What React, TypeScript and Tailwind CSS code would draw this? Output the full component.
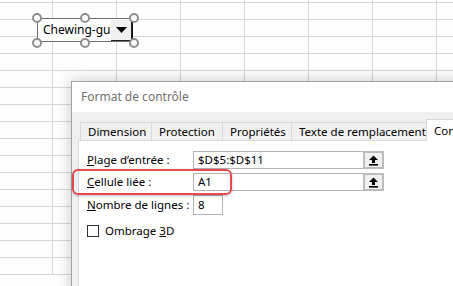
import React from 'react';

const COLS = [53, 64, 64, 64, 64, 64, 64, 64];
const ROWS = [3, ...Array(16).fill(17)];

const UploadIcon: React.FC = () => (
  <svg width="11" height="11" viewBox="0 0 11 11">
    <path d="M5.5 0.5 L10 5 H7 V8 H4 V5 H1 Z" fill="#000" />
    <rect x="1" y="9" width="9" height="1.6" fill="#000" />
  </svg>
);

const Handle: React.FC<{ className: string }> = ({ className }) => (
  <div className={`absolute w-[10px] h-[10px] rounded-full border-2 border-[#8e8e8e] bg-white ${className}`} />
);

const SheetGrid: React.FC = () => (
  <div className="flex flex-col">
    {ROWS.map((h, r) => (
      <div key={r} className="flex shrink-0" style={{ height: h }}>
        {COLS.map((w, c) => (
          <div key={c} className="shrink-0 border-r border-b border-[#d6d6d6]" style={{ width: w }} />
        ))}
      </div>
    ))}
  </div>
);

const Field: React.FC<{ label: React.ReactNode; value: string; picker?: boolean; narrow?: boolean }> = ({
  label,
  value,
  picker,
  narrow,
}) => (
  <div className="flex items-center h-[18px]">
    <div className="w-[106px] shrink-0 whitespace-nowrap text-black">{label}</div>
    {narrow ? (
      <div className="w-[30px] h-[20px] border border-[#b4b4b4] bg-white pl-[4px] flex items-center">{value}</div>
    ) : (
      <div className="flex h-[18px]">
        <div className="w-[170px] border border-[#b4b4b4] border-r-0 bg-white pl-[4px] flex items-center">{value}</div>
        <div className="w-[21px] border-2 border-[#bdbdbd] bg-[#f0f0f0] flex items-center justify-center">
          {picker && <UploadIcon />}
        </div>
      </div>
    )}
  </div>
);

const TABS = [
  { name: 'Dimension', w: 71 },
  { name: 'Protection', w: 71 },
  { name: 'Propriétés', w: 69 },
  { name: 'Texte de remplacement', w: 135 },
];

export default function App() {
  return (
    <div className="relative w-[453px] h-[286px] overflow-hidden bg-[#fdfefd] text-[11.5px] leading-none font-['Segoe_UI','Noto_Sans',sans-serif]">
      <SheetGrid />

      {/* combo box form control, selected */}
      <div className="absolute left-[37px] top-[18px] w-[96px] h-[24px]">
        <div className="flex h-full border border-[#6e6e6e] border-r-[#111] bg-white overflow-hidden">
          <div className="flex-1 pl-[5px] flex items-center whitespace-nowrap overflow-hidden text-black text-[12px]">
            Chewing-gum
          </div>
          <div className="w-[21px] mt-[1px] bg-[#efefef] border-r border-b border-[#222] flex items-center justify-center">
            <svg width="11" height="6" viewBox="0 0 11 6">
              <path d="M0 0 H11 L5.5 6 Z" fill="#000" />
            </svg>
          </div>
        </div>
        <Handle className="-left-[5px] -top-[5px]" />
        <Handle className="left-[43px] -top-[5px]" />
        <Handle className="-right-[6px] -top-[5px]" />
        <Handle className="-left-[5px] -bottom-[6px]" />
        <Handle className="left-[43px] -bottom-[6px]" />
        <Handle className="-right-[6px] -bottom-[6px]" />
      </div>

      {/* Format de contrôle dialog */}
      <div className="absolute left-[71px] top-[81px] w-[400px] h-[230px] border border-[#a3a3a3] bg-[#f0f0f0] shadow-[0_0_14px_rgba(0,0,0,0.22)]">
        <div className="h-[30px] bg-white flex items-center pl-[9px] text-[12px] text-[#707070]">Format de contrôle</div>
        <div className="flex items-end h-[28px] pl-[8px]">
          {TABS.map((t) => (
            <div
              key={t.name}
              className="h-[18px] shrink-0 border border-b-0 border-r-0 border-[#d9d9d9] flex items-center pl-[7px] text-black whitespace-nowrap overflow-hidden"
              style={{ width: t.w }}
            >
              {t.name}
            </div>
          ))}
          <div className="relative z-10 -mb-px h-[22px] w-[80px] shrink-0 border border-b-0 border-[#d9d9d9] bg-white flex items-center pl-[7px] text-black whitespace-nowrap">
            Contrôle
          </div>
        </div>
        <div className="ml-[6px] h-[200px] border border-[#d9d9d9] bg-white pl-[8px] pt-[10px] flex flex-col gap-[4px]">
          <Field
            label={
              <>
                <span className="underline">P</span>lage d’entrée :
              </>
            }
            value="$D$5:$D$11"
            picker
          />
          <Field
            label={
              <>
                <span className="underline">C</span>ellule liée :
              </>
            }
            value="A1"
            picker
          />
          <div className="mt-[1px]">
            <Field
              label={
                <>
                  <span className="underline">N</span>ombre de lignes :
                </>
              }
              value="8"
              narrow
            />
          </div>
          <div className="flex items-center gap-[6px] mt-[7px]">
            <div className="w-[12px] h-[12px] border border-[#333] bg-white" />
            <span className="text-black">
              Ombrage <span className="underline">3</span>D
            </span>
          </div>
        </div>
      </div>

      {/* red highlight around "Cellule liée" */}
      <div className="absolute left-[72px] top-[169px] w-[160px] h-[26px] border-2 border-[#e6484f] rounded-[6px] shadow-[0_1px_3px_rgba(0,0,0,0.25)]" />
    </div>
  );
}
